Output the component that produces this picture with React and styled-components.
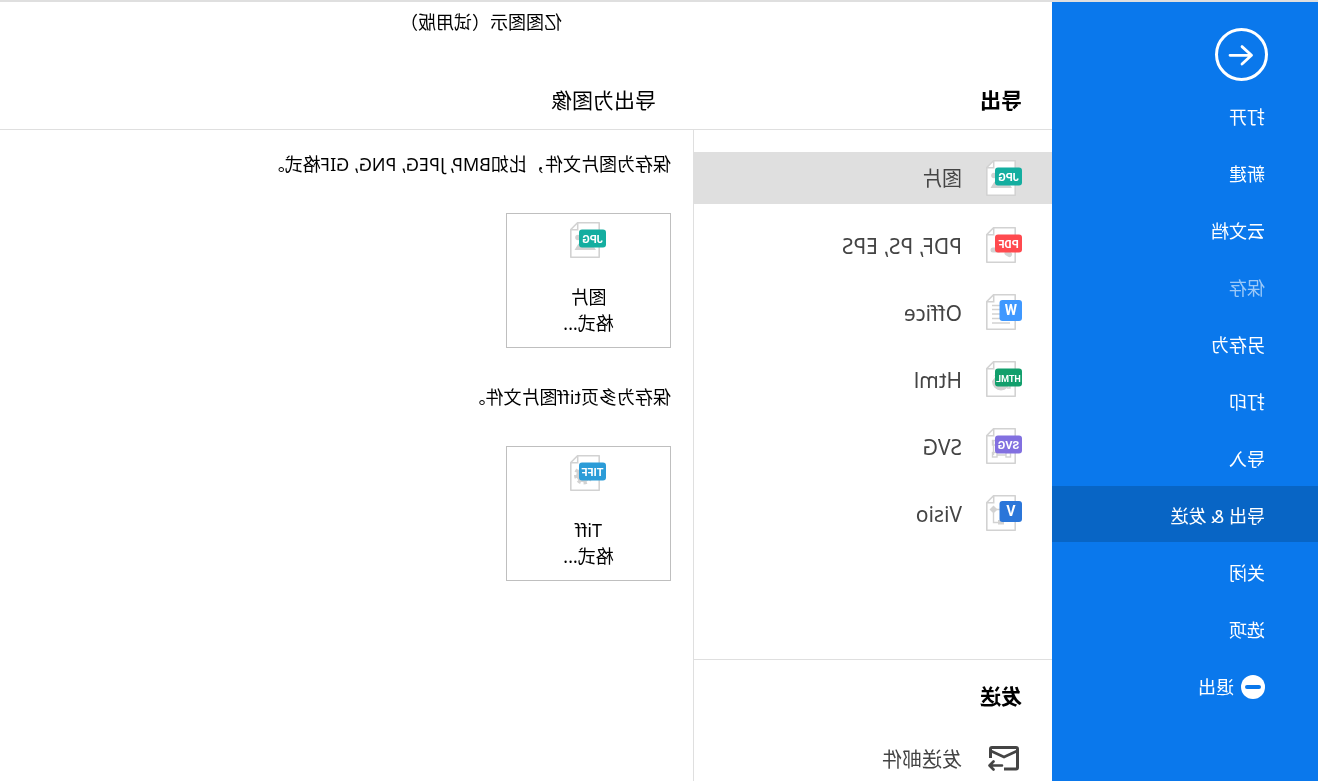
import styled, { createGlobalStyle } from "styled-components";

const GlobalStyle = createGlobalStyle`
  * {
    box-sizing: border-box;
  }

  body {
    margin: 0;
    background: #ffffff;
    font-family: "Noto Sans", "Noto Sans CJK SC", sans-serif;
  }

  button {
    border: none;
    padding: 0;
    background: none;
    font: inherit;
    cursor: pointer;
  }

  h1, h2, p {
    margin: 0;
  }
`;

// The whole window is flipped left to right
const Page = styled.div`
  height: 100vh;
  overflow: hidden;
  display: flex;
  border-top: 2px solid #dfdfdf;
  transform: scaleX(-1);
`;

const Sidebar = styled.nav`
  width: 266px;
  flex-shrink: 0;
  padding-top: 26px;
  background-color: #0a78ec;
  display: flex;
  flex-direction: column;
`;

const BackButton = styled.button`
  width: 53px;
  height: 53px;
  margin: 0 0 6px 50px;
  flex-shrink: 0;

  svg {
    display: block;
  }
`;

const MenuItem = styled.button`
  height: 56px;
  margin-bottom: 1px;
  padding: 3px 53px 0;
  flex-shrink: 0;
  display: flex;
  align-items: center;
  gap: 7px;
  background-color: ${(props) => (props.$active ? "#0865c5" : "transparent")};
  color: #ffffff;
  font-size: 18px;
  line-height: 26px;

  &:disabled {
    color: #9cc9f8;
    cursor: default;
  }
`;

const Main = styled.main`
  flex: 1;
  min-width: 0;
  display: flex;
  flex-direction: column;
`;

const AppTitle = styled.h1`
  height: 70px;
  padding: 7px 0 0 90px;
  font-size: 18px;
  font-weight: 400;
  line-height: 26px;
  text-align: center;
`;

const Heads = styled.div`
  display: grid;
  grid-template-columns: 359px 1fr;
  height: 58px;
  flex-shrink: 0;
  border-bottom: 1px solid #dfdfdf;
`;

const Heading = styled.h2`
  padding: 14px 0 0 ${(props) => (props.$wide ? "37px" : "30px")};
  font-size: 21px;
  font-weight: ${(props) => (props.$wide ? 400 : 700)};
  line-height: 28px;
`;

const Columns = styled.div`
  flex: 1;
  min-height: 0;
  display: grid;
  grid-template-columns: 359px 1fr;
`;

const Side = styled.div`
  min-height: 0;
  border-right: 1px solid #dfdfdf;
`;

const FormatList = styled.div`
  padding: 22px 0 120px;
  display: flex;
  flex-direction: column;
  gap: 15px;
`;

const SendList = styled.section`
  padding-top: 8px;
  border-top: 1px solid #dfdfdf;
`;

const Row = styled.button`
  width: 100%;
  height: 52px;
  padding-left: 30px;
  display: flex;
  align-items: center;
  gap: 24px;
  background-color: ${(props) => (props.$active ? "#dfdfdf" : "transparent")};
  color: #444444;
  font-size: 20px;
  line-height: 28px;
`;

const RowText = styled.span`
  padding-top: 2px;
  font-size: ${(props) => (props.$latin ? "21px" : "20px")};
`;

const SendRow = styled(Row)`
  margin-top: 23px;
`;

const Panel = styled.section`
  padding: 21px 22px 0;
`;

const Description = styled.p`
  margin-bottom: 36px;
  font-size: 18px;
  line-height: 26px;
`;

const Card = styled.button`
  width: 165px;
  height: 135px;
  margin-bottom: 36px;
  padding-top: 8px;
  border: 1px solid #bfbfbf;
  display: flex;
  flex-direction: column;
  align-items: center;
  justify-content: flex-start;
  color: #000000;
  font-size: 18px;
  line-height: 26px;

  svg {
    margin-bottom: 26px;
  }
`;

const BadgeText = styled.text`
  font-family: Roboto, sans-serif;
  font-weight: 700;
  fill: #ffffff;
  text-anchor: middle;
`;

const shapes = {
  jpg: (
    <g fill="#d2d2d2">
      <circle cx="28" cy="15.5" r="2.8" />
      <path d="M10 28 L17 17 L25 24 L27.5 21.5 L31.5 28 Z" />
    </g>
  ),
  pdf: (
    <g fill="none" stroke="#d2d2d2" strokeWidth="5" strokeLinecap="round">
      <path d="M12.5 27.5 L15 26 M23 23 L29 23" />
    </g>
  ),
  office: (
    <g stroke="#d2d2d2" strokeWidth="1.4">
      <path d="M18 11.5 H30 M18 15.5 H30 M18 20 H30 M18 24.5 H30 M12 29 H30" />
    </g>
  ),
  html: (
    <g fill="none" stroke="#d2d2d2" strokeWidth="1.5">
      <circle cx="21" cy="20.5" r="9" fill="#d2d2d2" stroke="none" />
      <path d="M12 24 V27 H15" />
      <path d="M26 14 L31 20" stroke="#ffffff" />
    </g>
  ),
  svg: (
    <g fill="none" stroke="#d2d2d2" strokeWidth="1.4">
      <path d="M28.5 12.5 V27 M16 27 H25" />
      <rect x="11.5" y="24.5" width="4.5" height="4.5" />
      <rect x="25" y="24.5" width="4.5" height="4.5" />
      <rect x="25" y="12.5" width="4.5" height="4.5" />
    </g>
  ),
  visio: (
    <g fill="#d2d2d2">
      <path d="M28.5 10.5 L32.5 14.5 L28.5 18.5 L24.5 14.5 Z" />
      <rect x="18" y="25" width="6" height="4.5" />
      <path
        d="M28.5 18 V27.5 H24 M28 14.5 H21"
        fill="none"
        stroke="#d2d2d2"
        strokeWidth="1.4"
      />
    </g>
  ),
  tiff: (
    <g fill="none" stroke="#d2d2d2">
      <circle cx="22.5" cy="20" r="5.5" strokeWidth="3.5" />
      <circle cx="22.5" cy="20" r="8" strokeWidth="3" strokeDasharray="3.3 2.98" />
    </g>
  ),
};

function FileIcon({ kind, label, color, size = 11, square }) {
  return (
    <svg width="36" height="36" viewBox="0 0 36 36" aria-hidden="true">
      <path
        d="M6.8 0.8 H28.5 L35.2 7.5 V35.2 H6.8 Z"
        fill="#ffffff"
        stroke="#d2d2d2"
        strokeWidth="1.6"
        strokeLinejoin="round"
      />
      <path d="M28.3 0.8 V7.7 H35.2" fill="none" stroke="#d2d2d2" strokeWidth="1.5" />
      {shapes[kind]}
      {square ? (
        <rect x="0" y="6" width="22.5" height="21" rx="3" fill={color} />
      ) : (
        <rect x="0" y="7.5" width="27" height="18" rx="3" fill={color} />
      )}
      <BadgeText x={square ? 11.2 : 13.5} y={square ? 21 : 20.5} fontSize={size}>
        {label}
      </BadgeText>
    </svg>
  );
}

function BackIcon() {
  return (
    <svg width="53" height="53" viewBox="0 0 53 53" aria-hidden="true">
      <g fill="none" stroke="#ffffff" strokeLinecap="round" strokeLinejoin="round">
        <circle cx="26.5" cy="26.5" r="25" strokeWidth="3" />
        <path d="M38 27.3 H16.5 M26 18.6 L16.5 27.3 L26 36" strokeWidth="2.8" />
      </g>
    </svg>
  );
}

function ExitIcon() {
  return (
    <svg width="24" height="24" viewBox="0 0 24 24" aria-hidden="true">
      <circle cx="12" cy="12" r="12" fill="#ffffff" />
      <rect x="4" y="10" width="16" height="4" rx="2" fill="#0a78ec" />
    </svg>
  );
}

function MailIcon() {
  return (
    <svg width="36" height="36" viewBox="0 0 36 36" aria-hidden="true">
      <g fill="none" stroke="#444444" strokeWidth="3">
        <path d="M18 28 H6 Q4.5 28 4.5 26.5 V8 Q4.5 6.5 6 6.5 H30 Q31.5 6.5 31.5 8 V17" />
        <path d="M5 10 L18 16 L31 10" strokeWidth="2.6" />
        <path
          d="M20 24.5 H32 M28.5 20.5 L32.5 24.5 L28.5 28.5"
          strokeWidth="2.6"
          strokeLinecap="round"
          strokeLinejoin="round"
        />
      </g>
    </svg>
  );
}

const menu = [
  { text: "打开" },
  { text: "新建" },
  { text: "云文档" },
  { text: "保存", disabled: true },
  { text: "另存为" },
  { text: "打印" },
  { text: "导入" },
  { text: "导出 & 发送", active: true },
  { text: "关闭" },
  { text: "选项" },
];

const formats = [
  { kind: "jpg", label: "JPG", color: "#14aea0", text: "图片", active: true },
  { kind: "pdf", label: "PDF", color: "#ff4a4f", text: "PDF, PS, EPS" },
  { kind: "office", label: "W", color: "#3f98ff", text: "Office", size: 14, square: true },
  { kind: "html", label: "HTML", color: "#129f6c", text: "Html", size: 9 },
  { kind: "svg", label: "SVG", color: "#8270e0", text: "SVG" },
  { kind: "visio", label: "V", color: "#2b76d9", text: "Visio", size: 14, square: true },
];

function App() {
  return (
    <>
      <GlobalStyle />
      <Page>
        <Sidebar>
          <BackButton aria-label="返回">
            <BackIcon />
          </BackButton>
          {menu.map((item) => (
            <MenuItem key={item.text} $active={item.active} disabled={item.disabled}>
              {item.text}
            </MenuItem>
          ))}
          <MenuItem>
            <ExitIcon />
            退出
          </MenuItem>
        </Sidebar>
        <Main>
          <AppTitle>亿图图示（试用版）</AppTitle>
          <Heads>
            <Heading>导出</Heading>
            <Heading $wide>导出为图像</Heading>
          </Heads>
          <Columns>
            <Side>
              <FormatList>
                {formats.map(({ text, active, ...icon }) => (
                  <Row key={text} $active={active}>
                    <FileIcon {...icon} />
                    <RowText $latin={icon.kind !== "jpg"}>{text}</RowText>
                  </Row>
                ))}
              </FormatList>
              <SendList>
                <Heading>发送</Heading>
                <SendRow>
                  <MailIcon />
                  <RowText>发送邮件</RowText>
                </SendRow>
              </SendList>
            </Side>
            <Panel>
              <Description>保存为图片文件，比如BMP, JPEG, PNG, GIF格式。</Description>
              <Card>
                <FileIcon kind="jpg" label="JPG" color="#14aea0" />
                <span>图片</span>
                <span>格式...</span>
              </Card>
              <Description>保存为多页tiff图片文件。</Description>
              <Card>
                <FileIcon kind="tiff" label="TIFF" color="#2b9cd8" />
                <span>Tiff</span>
                <span>格式...</span>
              </Card>
            </Panel>
          </Columns>
        </Main>
      </Page>
    </>
  );
}

export default App;
